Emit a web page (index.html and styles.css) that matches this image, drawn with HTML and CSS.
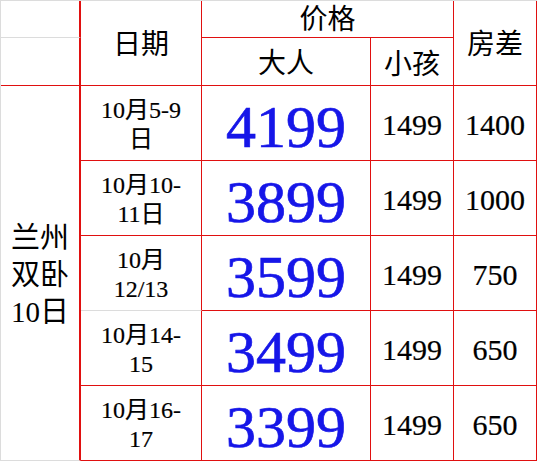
FILE: index.html
```html
<!DOCTYPE html>
<html>
<head>
<meta charset="utf-8">
<title>兰州双卧10日 价格表</title>
<link rel="stylesheet" href="styles.css">
</head>
<body>
<div class="sheet">
  <div class="cell corner-top"></div>
  <div class="cell head date-head">日期</div>
  <div class="cell head price-head">价格</div>
  <div class="cell head room-head">房差</div>
  <div class="cell corner-bottom"></div>
  <div class="cell head sub adult-head">大人</div>
  <div class="cell head sub child-head">小孩</div>

  <div class="cell route">兰州<br>双卧<br>10日</div>

  <div class="cell date">10月5-9<br>日</div>
  <div class="cell big">4199</div>
  <div class="cell num">1499</div>
  <div class="cell num">1400</div>

  <div class="cell date">10月10-<br>11日</div>
  <div class="cell big">3899</div>
  <div class="cell num">1499</div>
  <div class="cell num">1000</div>

  <div class="cell date grey-bottom">10月<br>12/13</div>
  <div class="cell big">3599</div>
  <div class="cell num">1499</div>
  <div class="cell num">750</div>

  <div class="cell date">10月14-<br>15</div>
  <div class="cell big">3499</div>
  <div class="cell num">1499</div>
  <div class="cell num">650</div>

  <div class="cell date">10月16-<br>17</div>
  <div class="cell big">3399</div>
  <div class="cell num">1499</div>
  <div class="cell num">650</div>
</div>
</body>
</html>
```

FILE: styles.css
```css
html, body {
  margin: 0;
  padding: 0;
  background: #ffffff;
}

.sheet {
  display: grid;
  grid-template-columns: 80px 121px 169px 83px 83px;
  grid-template-rows: 37px 48px 75px 75px 75px 75px 75px;
  border-left: 1px solid #dcdcdc;
  border-top: 1px solid #dcdcdc;
  width: 537px;
  box-sizing: border-box;
  font-family: "Liberation Serif", "Noto Sans CJK SC", serif;
  color: #000000;
}

.cell {
  box-sizing: border-box;
  border-right: 1px solid #e01010;
  border-bottom: 1px solid #e01010;
  display: flex;
  align-items: center;
  justify-content: center;
  text-align: center;
  overflow: hidden;
}

.corner-top {
  grid-column: 1;
  grid-row: 1;
  border-right: 2px solid #e01010;
  border-bottom: 1px solid #dcdcdc;
}

.corner-bottom {
  grid-column: 1;
  grid-row: 2;
  border-right: 2px solid #e01010;
}

.head {
  font-size: 28px;
  line-height: 1;
}

.date-head {
  grid-column: 2;
  grid-row: 1 / span 2;
  padding-top: 4px;
}

.price-head {
  grid-column: 3 / span 2;
  grid-row: 1;
  padding-top: 2px;
}

.room-head {
  grid-column: 5;
  grid-row: 1 / span 2;
  padding-top: 4px;
}

.adult-head {
  grid-column: 3;
  grid-row: 2;
  padding-top: 4px;
}

.child-head {
  grid-column: 4;
  grid-row: 2;
  padding-top: 6px;
}

.route {
  grid-column: 1;
  grid-row: 3 / span 5;
  border-right: 2px solid #e01010;
  border-bottom: 1px solid #dcdcdc;
  font-size: 29px;
  line-height: 37px;
  padding-top: 4px;
}

.date {
  grid-column: 2;
  font-size: 24px;
  line-height: 29px;
  padding-top: 4px;
  -webkit-text-stroke: 0.2px #000000;
}

.grey-bottom {
  border-bottom: 1px solid #dcdcdc;
}

.big {
  grid-column: 3;
  font-size: 60px;
  line-height: 1;
  color: #1616e8;
  -webkit-text-stroke: 0.7px #1616e8;
  padding-top: 8px;
}

.num {
  font-size: 30px;
  line-height: 1;
  padding-top: 4px;
  -webkit-text-stroke: 0.2px #000000;
}
```
